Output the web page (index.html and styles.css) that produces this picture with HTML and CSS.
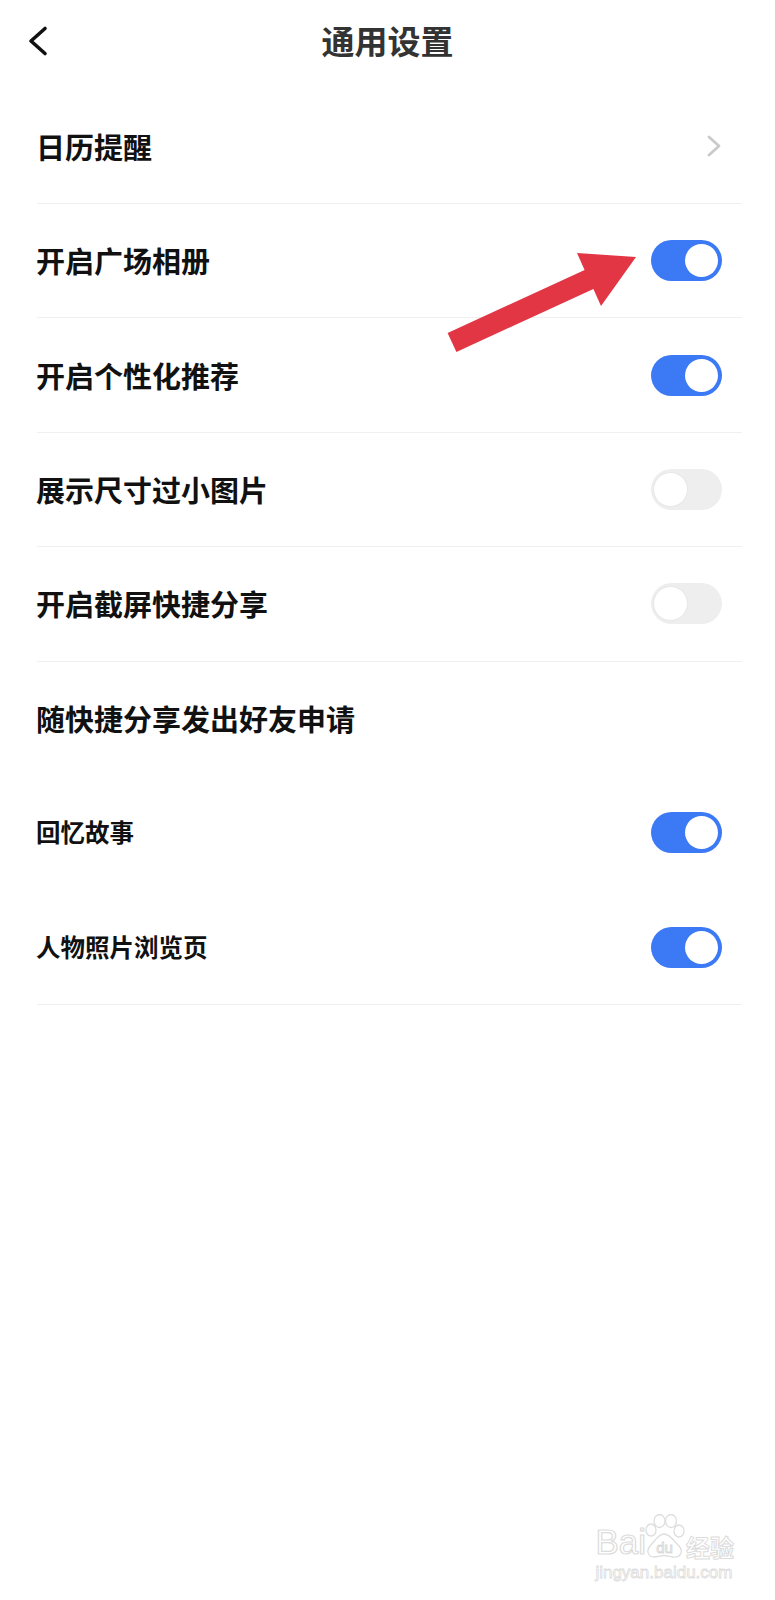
FILE: index.html
```html
<!DOCTYPE html>
<html lang="zh-CN">
  <head>
    <meta charset="UTF-8" />
    <meta name="viewport" content="width=device-width, initial-scale=1.0" />
    <title>通用设置</title>
    <link rel="stylesheet" href="styles.css">
  </head>
  <body>
    <div class="page">
      <header class="nav-bar">
        <button class="back-btn" aria-label="返回">
          <svg width="24" height="32" viewBox="0 0 24 32">
            <path d="M19 3.5 L5 16 L19 28.5" fill="none" stroke="#111" stroke-width="3.6" stroke-linecap="round" stroke-linejoin="round" />
          </svg>
        </button>
        <h1 class="nav-title">通用设置</h1>
        <span></span>
      </header>

      <ul class="settings-list">
        <li class="row">
          <span class="label">日历提醒</span>
          <svg class="chevron" width="14" height="22" viewBox="0 0 14 22">
            <path d="M2 2 L12 11 L2 20" fill="none" stroke="#cacaca" stroke-width="2.8" stroke-linecap="round" stroke-linejoin="round" />
          </svg>
        </li>
        <li class="row">
          <span class="label">开启广场相册</span>
          <span class="switch on"></span>
        </li>
        <li class="row">
          <span class="label">开启个性化推荐</span>
          <span class="switch on"></span>
        </li>
        <li class="row">
          <span class="label">展示尺寸过小图片</span>
          <span class="switch"></span>
        </li>
        <li class="row">
          <span class="label">开启截屏快捷分享</span>
          <span class="switch"></span>
        </li>
        <li class="row no-line">
          <span class="label">随快捷分享发出好友申请</span>
        </li>
        <li class="row no-line">
          <span class="label small">回忆故事</span>
          <span class="switch on"></span>
        </li>
        <li class="row">
          <span class="label small">人物照片浏览页</span>
          <span class="switch on"></span>
        </li>
      </ul>

      <!-- red pointer drawn over the list -->
      <svg class="pointer" width="775" height="400" viewBox="0 0 775 400">
        <polygon points="447.6,333 584.6,270 577,253 636,257 601,306 593.4,289 456.4,352" fill="#e23645" />
      </svg>

      <div class="watermark">
        <div class="wm-top">
          <span class="wm-bai">Bai</span>
          <svg width="42" height="46" viewBox="0 0 42 46">
            <g fill="#fff" stroke="#dedede" stroke-width="1.3">
              <ellipse cx="7" cy="16" rx="5" ry="6" />
              <ellipse cx="15.5" cy="7" rx="5.5" ry="6.5" />
              <ellipse cx="27" cy="7" rx="5.5" ry="6.5" />
              <ellipse cx="35" cy="17" rx="5" ry="6" />
              <path d="M20 20 C26 20 30 27 35 32 C40 38 36 44 29 43 C25 42.5 23 41.5 20 41.5 C17 41.5 14 43 10 43 C4 43 2 37 6 32 C11 27 14 20 20 20 Z" />
            </g>
            <text x="20.5" y="39" text-anchor="middle" class="wm-du">du</text>
          </svg>
          <span class="wm-jy">经验</span>
        </div>
        <div class="wm-url">jingyan.baidu.com</div>
      </div>
    </div>
  </body>
</html>
```

FILE: styles.css
```css
body {
  margin: 0;
  background: #fff;
  font-family: "Noto Sans CJK SC", "Noto Sans", sans-serif;
  color: #111;
}
.page {
  position: relative;
  width: 775px;
  min-height: 1600px;
}
.nav-bar {
  height: 80px;
  display: grid;
  grid-template-columns: 1fr auto 1fr;
  align-items: center;
  padding-left: 26px;
  padding-right: 26px;
}
.back-btn {
  background: none;
  border: none;
  padding: 0;
  width: 24px;
  height: 32px;
  display: block;
  margin-top: 2px;
}
.back-btn svg {
  display: block;
}
.nav-title {
  margin: 0;
  font-size: 33px;
  line-height: 1;
  font-weight: 700;
  color: #333;
}
.settings-list {
  list-style: none;
  margin: 9.6px 33px 0 37px;
  padding: 0;
}
.row {
  height: 114.4px;
  box-sizing: border-box;
  border-bottom: 1px solid #f0f0f0;
  display: flex;
  align-items: center;
  justify-content: space-between;
  padding-right: 20px;
}
.row.no-line {
  border-bottom-color: transparent;
}
.label {
  font-size: 29px;
  font-weight: 700;
  line-height: 1;
  margin-left: -1px;
}
.label.small {
  font-size: 24.5px;
}
.chevron {
  display: block;
  margin-right: 1px;
}
/* toggle switch */
.switch {
  position: relative;
  width: 71px;
  height: 41px;
  border-radius: 21px;
  background: #eeeeee;
  flex-shrink: 0;
}
.switch::after {
  content: "";
  position: absolute;
  top: 3px;
  left: 2px;
  width: 33px;
  height: 33px;
  border-radius: 50%;
  background: #fff;
  border: 1px solid #e6e6e6;
}
.switch.on {
  background: #3c79f5;
}
.switch.on::after {
  left: auto;
  right: 4px;
  top: 4px;
  border: none;
}
.pointer {
  position: absolute;
  top: 0;
  left: 0;
  pointer-events: none;
}
.watermark {
  position: absolute;
  right: 41px;
  bottom: 19px;
  font-family: "Liberation Sans", sans-serif;
  color: #fff;
}
.wm-top {
  display: flex;
  align-items: flex-end;
}
.wm-bai {
  font-size: 35px;
  line-height: 1;
  -webkit-text-stroke: 1.2px #dcdcdc;
  margin-right: -2px;
  margin-bottom: 1px;
}
.wm-du {
  font-family: "Liberation Sans", sans-serif;
  font-size: 15px;
  fill: #fff;
  stroke: #d8d8d8;
  stroke-width: 0.9;
}
.wm-jy {
  font-family: "Noto Sans CJK SC", sans-serif;
  font-size: 24px;
  line-height: 1;
  font-weight: 700;
  -webkit-text-stroke: 1px #dcdcdc;
  margin-bottom: 1px;
}
.wm-url {
  font-size: 17px;
  line-height: 1;
  margin-top: 4px;
  -webkit-text-stroke: 0.8px #dcdcdc;
}
```
